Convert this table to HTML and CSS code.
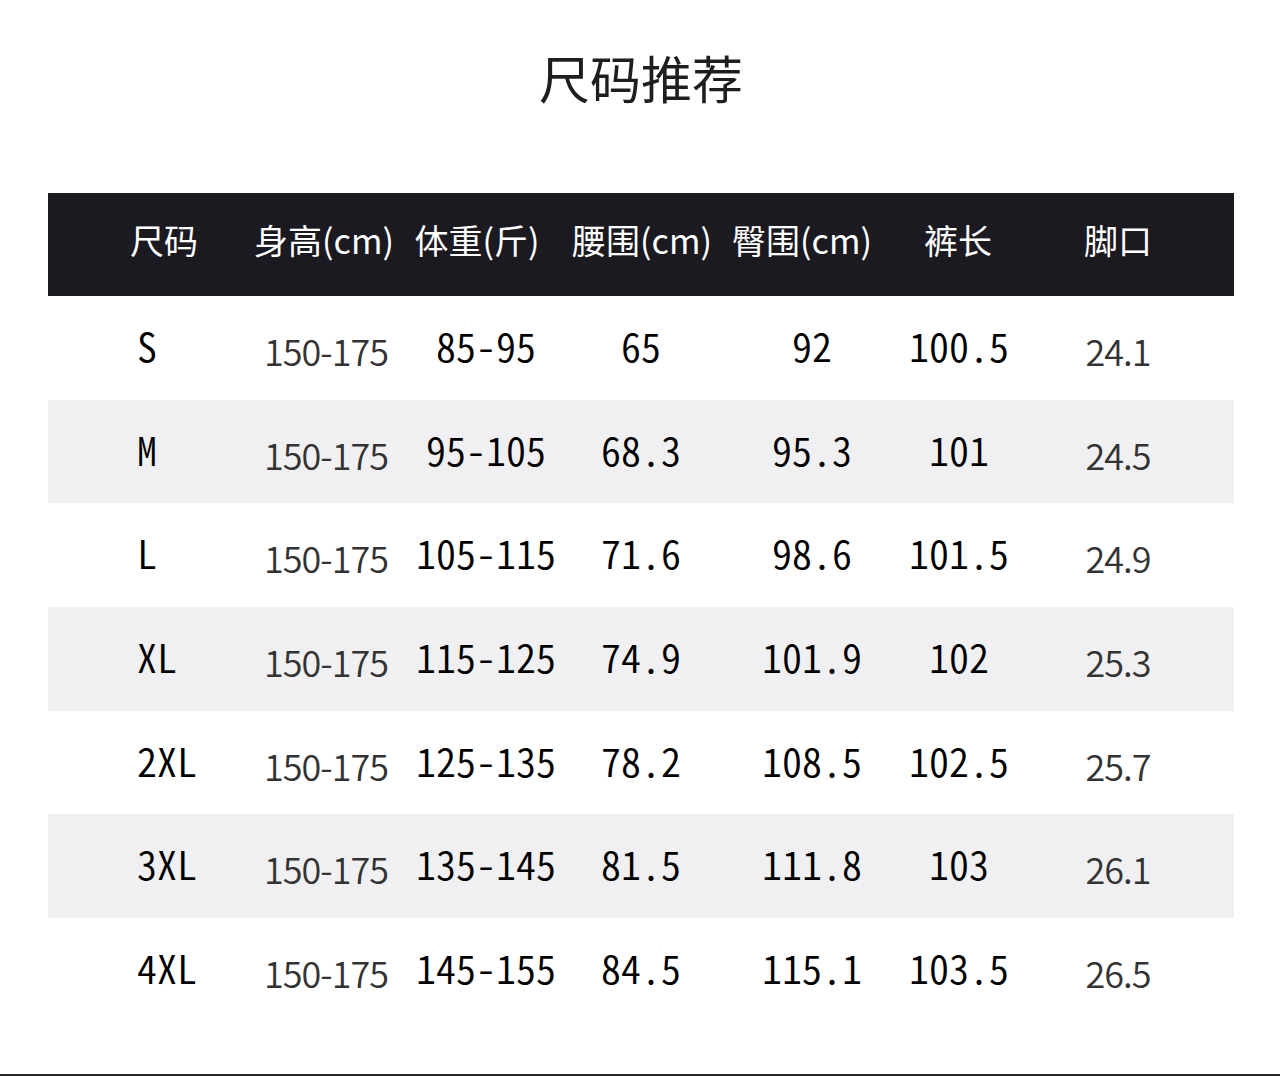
FILE: index.html
```html
<!DOCTYPE html>
<html lang="zh-CN">
<head>
<meta charset="utf-8">
<title>尺码推荐</title>
<link rel="stylesheet" href="styles.css">
</head>
<body>
<div class="page">
  <h1 class="title">尺码推荐</h1>
  <div class="table">
    <div class="row head">
      <div class="cell c-size">尺码</div>
      <div class="cell">身高(cm)</div>
      <div class="cell">体重(斤)</div>
      <div class="cell">腰围(cm)</div>
      <div class="cell">臀围(cm)</div>
      <div class="cell">裤长</div>
      <div class="cell">脚口</div>
    </div>
    <div class="row">
      <div class="cell c-size mono">S</div>
      <div class="cell prop">150-175</div>
      <div class="cell mono">85-95</div>
      <div class="cell mono">65</div>
      <div class="cell mono">92</div>
      <div class="cell mono">100.5</div>
      <div class="cell prop">24.1</div>
    </div>
    <div class="row alt">
      <div class="cell c-size mono">M</div>
      <div class="cell prop">150-175</div>
      <div class="cell mono">95-105</div>
      <div class="cell mono">68.3</div>
      <div class="cell mono">95.3</div>
      <div class="cell mono">101</div>
      <div class="cell prop">24.5</div>
    </div>
    <div class="row">
      <div class="cell c-size mono">L</div>
      <div class="cell prop">150-175</div>
      <div class="cell mono">105-115</div>
      <div class="cell mono">71.6</div>
      <div class="cell mono">98.6</div>
      <div class="cell mono">101.5</div>
      <div class="cell prop">24.9</div>
    </div>
    <div class="row alt">
      <div class="cell c-size mono">XL</div>
      <div class="cell prop">150-175</div>
      <div class="cell mono">115-125</div>
      <div class="cell mono">74.9</div>
      <div class="cell mono">101.9</div>
      <div class="cell mono">102</div>
      <div class="cell prop">25.3</div>
    </div>
    <div class="row">
      <div class="cell c-size mono">2XL</div>
      <div class="cell prop">150-175</div>
      <div class="cell mono">125-135</div>
      <div class="cell mono">78.2</div>
      <div class="cell mono">108.5</div>
      <div class="cell mono">102.5</div>
      <div class="cell prop">25.7</div>
    </div>
    <div class="row alt">
      <div class="cell c-size mono">3XL</div>
      <div class="cell prop">150-175</div>
      <div class="cell mono">135-145</div>
      <div class="cell mono">81.5</div>
      <div class="cell mono">111.8</div>
      <div class="cell mono">103</div>
      <div class="cell prop">26.1</div>
    </div>
    <div class="row">
      <div class="cell c-size mono">4XL</div>
      <div class="cell prop">150-175</div>
      <div class="cell mono">145-155</div>
      <div class="cell mono">84.5</div>
      <div class="cell mono">115.1</div>
      <div class="cell mono">103.5</div>
      <div class="cell prop">26.5</div>
    </div>
  </div>
</div>
<div class="bottom-line"></div>
</body>
</html>
```

FILE: styles.css
```css
html, body {
  margin: 0;
  padding: 0;
  background: #fff;
}
body {
  font-family: "Noto Sans CJK SC", "Noto Sans", sans-serif;
  color: #111;
  width: 1280px;
}
.page {
  height: 1074px;
  box-sizing: border-box;
  padding-top: 47px;
}
.title {
  margin: 0;
  height: 146px;
  line-height: 60px;
  font-size: 51px;
  font-weight: 400;
  color: #1e1e1e;
  text-align: center;
  padding-left: 2px;
  box-sizing: border-box;
}
.table {
  margin-left: 48px;
  width: 1186px;
}
.row {
  display: grid;
  grid-template-columns: 198px 160px 160px 150px 192px 102px 216px;
  height: 103.7px;
  align-items: center;
}
.row.head {
  grid-template-columns: 198px 156px 150px 180px 140px 172px 148px;
  height: 103px;
  background: #1b1a21;
  color: #fff;
  font-size: 34px;
  padding-bottom: 10px;
  box-sizing: border-box;
}
.row.alt {
  background: #f0f0f2;
}
.cell {
  text-align: center;
  white-space: nowrap;
}
.cell.c-size {
  text-align: left;
  padding-left: 89px;
}
.head .cell.c-size {
  padding-left: 82px;
}
.mono {
  font-family: "Noto Sans CJK SC", sans-serif;
  font-feature-settings: "hwid" 1;
  font-size: 40px;
  font-weight: 350;
  color: #000;
  padding-bottom: 6px;
}
.prop {
  font-family: "Noto Sans CJK SC", "Noto Sans", sans-serif;
  font-size: 36px;
  font-weight: 350;
  letter-spacing: -1px;
  color: #333;
  padding-top: 4px;
}
.bottom-line {
  height: 2px;
  background: #2a2a2a;
}
```
